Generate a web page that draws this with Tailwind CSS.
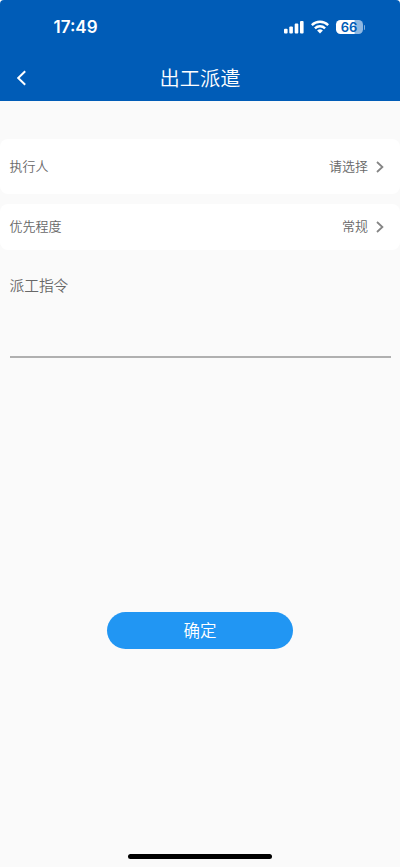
<!DOCTYPE html>
<html lang="zh-CN">
<head>
<meta charset="utf-8">
<meta name="viewport" content="width=device-width, initial-scale=1">
<title>出工派遣</title>
<script src="https://cdn.jsdelivr.net/npm/@tailwindcss/browser@4"></script>
</head>
<body class="bg-white">
<div class="relative flex h-[867px] w-[400px] flex-col overflow-hidden rounded-t-[4px] bg-[#fafafa] font-['Noto_Sans_CJK_SC',sans-serif] font-[350] text-[#686868]">
  <header class="h-[101px] shrink-0 bg-[#005cb7] text-white">
    <div class="flex h-[54px] items-center justify-between pl-[53.5px] pr-[35px]">
      <span class="font-['Inter',sans-serif] text-[17px] leading-6 font-semibold">17:49</span>
      <div class="flex items-center gap-[7px]">
        <svg class="h-[14px] w-[21px]" viewBox="0 0 21 14" fill="white"><rect x="1" y="8.8" width="3.6" height="4.6" rx="1"/><rect x="6.3" y="6.4" width="3.6" height="7" rx="1"/><rect x="11.7" y="3.6" width="3.6" height="9.8" rx="1"/><rect x="17" y="1" width="3.6" height="12.4" rx="1"/></svg>
        <svg class="h-[14px] w-[18px]" viewBox="0 0 18 14" fill="none" stroke="white" stroke-width="2.4"><path d="M.8 5.1a11.7 11.7 0 0 1 16.4 0"/><path d="M3.9 8.4a7.3 7.3 0 0 1 10.2 0"/><path d="M9 13.5 6.1 10.6a4.1 4.1 0 0 1 5.8 0Z" fill="white" stroke="none"/></svg>
        <div class="flex items-center gap-px">
          <div class="flex h-[14px] w-[27px] items-center justify-center rounded-[4.5px] bg-linear-to-r from-white from-66% to-[#8fb8e2] to-72% font-['Inter',sans-serif] text-[13px] leading-[14px] font-semibold text-[#005cb7]">66</div>
          <div class="h-[5px] w-[1.5px] rounded-r-full bg-[#80addb]"></div>
        </div>
      </div>
    </div>
    <div class="grid h-[47px] grid-cols-[48px_1fr_48px] items-center">
      <svg class="ml-[16px] h-4 w-[11px]" viewBox="0 0 11 16" fill="none" stroke="white" stroke-width="2"><path d="M9.2 1.2 2.2 8l7 6.8"/></svg>
      <h1 class="-mt-px text-center text-[20.3px] leading-6 font-[350]">出工派遣</h1>
    </div>
  </header>
  <main class="flex flex-col pt-[38px] text-[13px] leading-5">
    <div class="flex h-[55px] items-center justify-between rounded-[8px] bg-white pl-[9.5px] pr-4">
      <span class="-mt-px">执行人</span>
      <div class="flex items-center gap-[8px]"><span class="-mt-px">请选择</span><svg class="h-3 w-2" viewBox="0 0 8 12" fill="none" stroke="#858585" stroke-width="1.8"><path d="m1 1 5.4 5L1 11"/></svg></div>
    </div>
    <div class="mt-[10px] flex h-[46px] items-center justify-between rounded-[8px] bg-white pl-[9.5px] pr-4">
      <span class="-mt-[2px]">优先程度</span>
      <div class="flex items-center gap-[8px]"><span class="-mt-[2px]">常规</span><svg class="h-3 w-2" viewBox="0 0 8 12" fill="none" stroke="#858585" stroke-width="1.8"><path d="m1 1 5.4 5L1 11"/></svg></div>
    </div>
    <div class="mx-[9.5px] mt-[25px] h-[83px] border-b-2 border-[#b0b0b0] text-[14.7px]">派工指令</div>
    <button class="mt-[253.5px] flex h-[37.5px] w-[186px] items-center justify-center self-center rounded-full bg-[#2196f3] text-[16.5px] text-white">确定</button>
  </main>
  <div class="mt-auto mb-[8px] h-[5px] w-[144px] self-center rounded-full bg-black"></div>
</div>
</body>
</html>
